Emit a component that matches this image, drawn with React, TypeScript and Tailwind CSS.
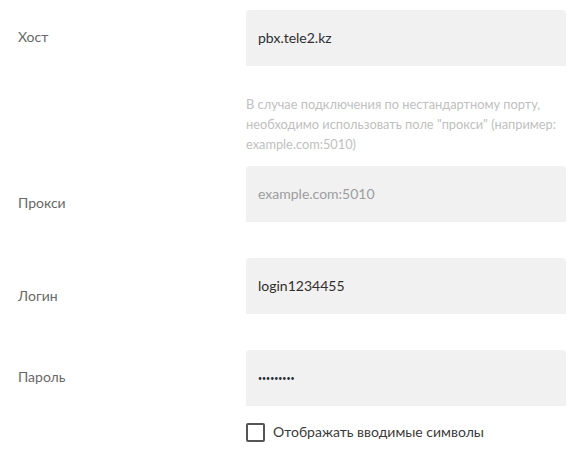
import React from "react";

const font = { fontFamily: '"Lato", "Noto Sans", sans-serif' };

function Label({ text, pt }: { text: string; pt: string }) {
  return (
    <div className={`w-[246px] shrink-0 pl-[18px] text-[14px] leading-[20px] text-[#686868] ${pt}`}>
      {text}
    </div>
  );
}

function Field({ value, placeholder }: { value?: string; placeholder?: boolean }) {
  return (
    <div className="w-[320px] h-[56px] bg-[#f1f1f1] rounded-t-[4px] flex items-center pl-[12px]">
      <span className={`text-[14px] leading-[20px] ${placeholder ? "text-[#9d9d9d]" : "text-[#2f2f2f]"}`}>{value}</span>
    </div>
  );
}

export default function App() {
  return (
    <div className="w-[582px] h-[458px] bg-white" style={font}>
      <div className="flex flex-col pt-[10px]">
        <div className="flex">
          <Label text="Хост" pt="pt-[17px]" />
          <div className="flex flex-col">
            <Field value="pbx.tele2.kz" />
            <p className="mt-[28px] w-[320px] text-[12.8px] leading-[20px] text-[#c0c0c0]">
              В случае подключения по нестандартному порту, необходимо использовать поле "прокси" (например: example.com:5010)
            </p>
          </div>
        </div>
        <div className="flex mt-[12px]">
          <Label text="Прокси" pt="pt-[27px]" />
          <Field value="example.com:5010" placeholder />
        </div>
        <div className="flex mt-[36px]">
          <Label text="Логин" pt="pt-[28px]" />
          <Field value="login1234455" />
        </div>
        <div className="flex mt-[36px]">
          <Label text="Пароль" pt="pt-[17px]" />
          <div className="flex flex-col">
            <div className="w-[320px] h-[56px] bg-[#f1f1f1] rounded-t-[4px] flex items-center pl-[12px]">
              <span className="text-[7px] leading-[10px] tracking-[0px] text-[#2b2b2b]">•••••••••</span>
            </div>
            <label className="mt-[16px] flex items-center gap-[8px]">
              <span className="w-[19px] h-[19px] border-2 border-[#555] rounded-[2px] bg-white" />
              <span className="text-[14px] leading-[20px] text-[#3a3a3a]">Отображать вводимые символы</span>
            </label>
          </div>
        </div>
      </div>
    </div>
  );
}
